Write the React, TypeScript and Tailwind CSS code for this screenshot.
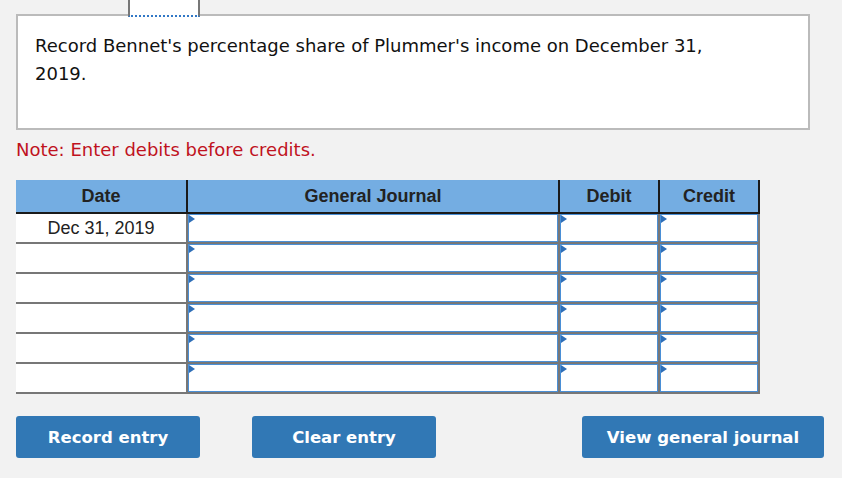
import React from "react";

const rows = ["Dec 31, 2019", "", "", "", "", ""];

const Cell = () => (
    <div className="relative h-full bg-white border border-[#4a8fd6]">
        <span className="absolute left-0 top-0 w-0 h-0 border-y-[4px] border-y-transparent border-l-[6px] border-l-[#2f6fb8]"></span>
    </div>
);

const App = () => {
    return (
        <div className="w-[842px] h-[478px] bg-[#f2f2f2] relative overflow-hidden" style={{ fontFamily: "'DejaVu Sans', Verdana, sans-serif" }}>
            {/* tab above the question box */}
            <div className="absolute left-[128px] top-0 w-[72px] h-[17px] bg-white border-x-2 border-x-[#777] border-b-2 border-b-[#3178c6] [border-bottom-style:dotted] z-10"></div>

            <div className="pt-[14px] px-4">
                {/* Question box */}
                <div className="w-[794px] h-[116px] bg-white border-2 border-[#bbbbbb] px-[17px] pt-[16px] text-[18px] leading-[28px] text-[#111]">
                    Record Bennet's percentage share of Plummer's income on December 31,
                    <br />
                    2019.
                </div>

                <p className="mt-[9px] text-[18px] leading-[22px] text-[#c0121e]">Note: Enter debits before credits.</p>

                {/* Journal table */}
                <div className="mt-[19px] w-[744px]" style={{ fontFamily: "'Liberation Sans', Arial, sans-serif" }}>
                    <div className="flex h-[34px] bg-[#74ade2] border-b-2 border-[#1a1a1a] text-[18px] font-bold text-[#222]">
                        <div className="w-[172px] flex items-center justify-center border-r-2 border-[#1a1a1a]">Date</div>
                        <div className="w-[372px] flex items-center justify-center border-r-2 border-[#1a1a1a]">General Journal</div>
                        <div className="w-[100px] flex items-center justify-center border-r-2 border-[#1a1a1a]">Debit</div>
                        <div className="w-[100px] flex items-center justify-center border-r-2 border-[#1a1a1a]">Credit</div>
                    </div>
                    {rows.map((d, i) => (
                        <div key={i} className="flex h-[30px] border-b-2 border-[#777]">
                            <div className="w-[172px] bg-white flex items-center justify-center text-[18px] text-[#222] border-r-2 border-[#777]">{d}</div>
                            <div className="w-[372px] border-r-2 border-[#777]"><Cell /></div>
                            <div className="w-[100px] border-r-2 border-[#777]"><Cell /></div>
                            <div className="w-[100px] border-r-2 border-[#777]"><Cell /></div>
                        </div>
                    ))}
                </div>

                {/* Buttons */}
                <div className="mt-[22px] flex text-[16.5px] font-bold text-white">
                    <button className="w-[184px] h-[42px] pt-[2px] rounded-[3px] bg-[#3178b5]">Record entry</button>
                    <button className="ml-[52px] w-[184px] h-[42px] pt-[2px] rounded-[3px] bg-[#3178b5]">Clear entry</button>
                    <button className="ml-[146px] w-[242px] h-[42px] pt-[2px] rounded-[3px] bg-[#3178b5]">View general journal</button>
                </div>
            </div>
        </div>
    );
};

export default App;
